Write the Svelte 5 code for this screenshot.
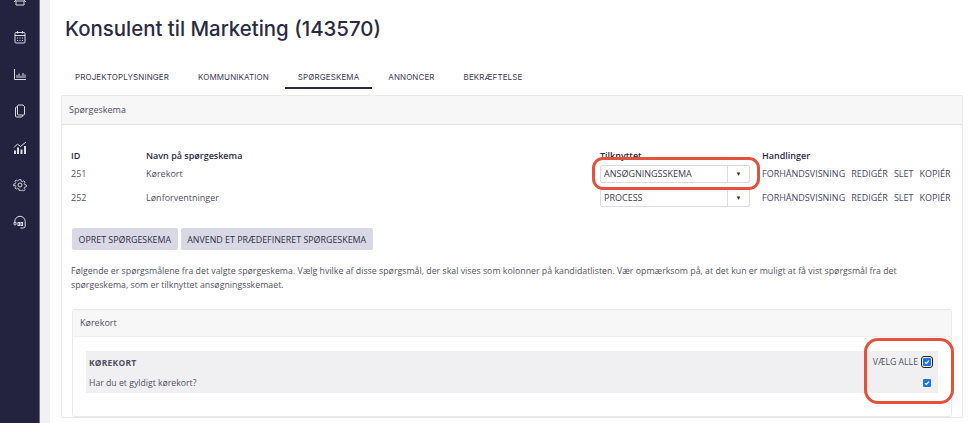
<script>
  const tabs = ['Projektoplysninger', 'Kommunikation', 'Spørgeskema', 'Annoncer', 'Bekræftelse'];
  const rows = [
    { id: 251, name: 'Kørekort', linked: 'ANSØGNINGSSKEMA' },
    { id: 252, name: 'Lønforventninger', linked: 'PROCESS' }
  ];
  const actions = ['Forhåndsvisning', 'Redigér', 'Slet', 'Kopiér'];
</script>

<div class="shell">
  <nav class="sidebar">
    <svg class="icon first" viewBox="0 0 14 14"><path d="M3 1v3c0 1 1 2 4 2s4-1 4-2V1M1 9l2-2M13 9l-2-2M3 8h8v4H3z"/></svg>
    <svg class="icon" viewBox="0 0 14 14"><rect x="2" y="2.500" width="10" height="10.500" rx="1"/><path d="M2 5.500h10M4.500 1v2.500M9.500 1v2.500M4 8h1M6.500 8h1M9 8h1M4 10.500h1M6.500 10.500h1M9 10.500h1"/></svg>
    <svg class="icon" viewBox="0 0 14 14"><path d="M1.500 2v10.500h11.500M4 11V8M6 11V6.500M8 11V8.500M10 11V6M12 11V7.500"/></svg>
    <svg class="icon" viewBox="0 0 14 14"><path d="M5.500 1h4.500l1.500 1.500V10a1 1 0 0 1-1 1H5.500a1 1 0 0 1-1-1V2a1 1 0 0 1 1-1zM4.500 3H3.500a1 1 0 0 0-1 1V12a1 1 0 0 0 1 1h5a1 1 0 0 0 1-1v-1"/></svg>
    <svg class="icon" viewBox="0 0 14 14"><path d="M1 6.500l3.500-3.500 3 2.500L13 1"/><path class="thick" d="M2 13V9.500M5 13V6.500M8.500 13V8.500M12 13V5"/></svg>
    <svg class="icon" viewBox="0 0 14 14"><circle cx="7" cy="7" r="2"/><path d="M6 1h2l.4 1.700 1.300.6 1.500-.9 1.400 1.400-.9 1.500.6 1.300 1.700.4v2l-1.700.4-.6 1.300.9 1.500-1.400 1.400-1.500-.9-1.300.6L8 13H6l-.4-1.700-1.300-.6-1.500.9-1.400-1.400.9-1.500-.6-1.300L0 8V6l1.700-.4.600-1.300-.9-1.500 1.400-1.400 1.500.9 1.300-.6z" transform="translate(.7 .7) scale(.9)"/></svg>
    <svg class="icon" viewBox="0 0 14 14"><path d="M1.800 8V6.500a5.200 5.200 0 0 1 10.400 0V11a2 2 0 0 1-2 2H7.500"/><rect x="1" y="7" width="2" height="3" rx="1"/><rect x="5" y="7.500" width="1.600" height="3"/><rect x="8" y="7.500" width="1.600" height="3"/></svg>
  </nav>

  <div class="gutter"></div>

  <main class="page">
    <h1>Konsulent til Marketing (143570)</h1>

    <div class="tabs">
      {#each tabs as tab, i}
        <span class="tab" class:active={i === 2}>{tab}</span>
      {/each}
    </div>

    <section class="card">
      <header class="card-head">Spørgeskema</header>
      <div class="card-body">
        <div class="table">
          <div class="cell head">ID</div>
          <div class="cell head">Navn på spørgeskema</div>
          <div class="cell head">Tilknyttet</div>
          <div class="cell head">Handlinger</div>
          {#each rows as row}
            <div class="cell">{row.id}</div>
            <div class="cell">{row.name}</div>
            <div class="cell">
              <div class="select">
                <span class="select-value">{row.linked}</span>
                <span class="select-arrow">▼</span>
              </div>
            </div>
            <div class="cell links">
              {#each actions as action}
                <span>{action}</span>
              {/each}
            </div>
          {/each}
          <div class="ring ring-select"></div>
        </div>

        <div class="buttons">
          <button>Opret spørgeskema</button>
          <button>Anvend et prædefineret spørgeskema</button>
        </div>

        <p class="intro">
          Følgende er spørgsmålene fra det valgte spørgeskema. Vælg hvilke af disse spørgsmål, der skal vises som kolonner på kandidatlisten. Vær opmærksom på, at det kun er muligt at få vist spørgsmål fra det spørgeskema, som er tilknyttet ansøgningsskemaet.
        </p>

        <section class="card inner">
          <header class="inner-head">Kørekort</header>
          <div class="inner-body">
            <div class="question">
              <div class="q-row">
                <strong>KØREKORT</strong>
                <span class="select-all">VÆLG ALLE <span class="check-box focus"><svg viewBox="0 0 10 10"><path d="M2.500 5.300l1.700 1.500 3.300-3.600"/></svg></span></span>
              </div>
              <div class="q-row">
                <span>Har du et gyldigt kørekort?</span>
                <span class="check-box"><svg viewBox="0 0 10 10"><path d="M2.500 5.300l1.700 1.500 3.300-3.600"/></svg></span>
              </div>
            </div>
            <div class="ring ring-check"></div>
          </div>
        </section>
      </div>
    </section>
  </main>
</div>

<style>
  :global(body) {
    margin: 0;
    background: #fff;
  }

  .shell {
    display: flex;
    height: 423px;
    overflow: hidden;
    font-family: 'Open Sans', sans-serif;
    color: #50505f;
  }

  .sidebar {
    flex: 0 0 40px;
    box-sizing: border-box;
    background: #23233f;
    border-right: 1px solid #6e6e7c;
    display: flex;
    flex-direction: column;
    align-items: center;
    gap: 23px;
  }

  .icon {
    width: 14px;
    height: 14px;
    flex: none;
    fill: none;
    stroke: #dcdce4;
    stroke-width: 1;
  }

  .icon .thick {
    stroke-width: 2;
  }

  .icon.first {
    margin-top: -7.500px;
  }

  .gutter {
    flex: 0 0 10px;
    background: #f1f1f5;
  }

  .page {
    flex: 1;
    min-width: 0;
    margin-top: 2px;
    background: #fff;
    padding: 0 12px 0 11px;
  }

  h1 {
    margin: 0 0 0 4px;
    padding-top: 14.500px;
    font-family: Inter, sans-serif;
    font-size: 20.400px;
    line-height: 24px;
    font-weight: 500;
    color: #2a2a45;
  }

  .tabs {
    display: flex;
    gap: 3px;
    margin: 27.500px 0 0 1px;
  }

  .tab {
    box-sizing: border-box;
    height: 21px;
    padding: 0 13px;
    font-family: Inter, sans-serif;
    font-size: 8px;
    line-height: 19px;
    letter-spacing: 0.1px;
    text-transform: uppercase;
    color: #3a3a52;
  }

  .tab.active {
    border-bottom: 2.500px solid #2a2a45;
  }

  .card {
    border: 1px solid #e9e9ec;
    border-radius: 2px;
    background: #fff;
  }

  .tabs + .card {
    margin-top: 6px;
  }

  .card-head {
    height: 28px;
    padding-left: 7px;
    font-size: 9px;
    line-height: 27px;
    background: #f7f7f8;
    border-bottom: 1px solid #e4e4e8;
  }

  .card-body {
    padding: 24px 10px 0 9px;
  }

  .table {
    position: relative;
    display: grid;
    grid-template-columns: 75px 454px 162px 1fr;
    grid-template-rows: 13px 23px 25px;
    align-items: center;
    font-size: 9px;
  }

  .cell.head {
    font-weight: 600;
    color: #2a2a45;
  }

  .select {
    box-sizing: border-box;
    width: 150px;
    height: 18px;
    display: flex;
    align-items: center;
    border: 1px solid #dcdce0;
    border-radius: 2px;
    color: #3a3a4e;
    background: #fff;
  }

  .select-value {
    flex: 1;
    padding-left: 3px;
  }

  .select-arrow {
    width: 21px;
    text-align: center;
    font-size: 6px;
    line-height: 16px;
    border-left: 1px solid #dcdce0;
    color: #333;
  }

  .links {
    display: flex;
    gap: 6px;
    color: #45456a;
    white-space: nowrap;
    text-transform: uppercase;
  }

  .ring {
    position: absolute;
    box-sizing: border-box;
    border: 3.500px solid #e4513c;
    pointer-events: none;
  }

  .ring-select {
    left: 521px;
    top: 8px;
    width: 168px;
    height: 33px;
    border-radius: 11px;
  }

  .buttons {
    display: flex;
    gap: 3px;
    margin: 18px 0 0 1px;
  }

  button {
    height: 22px;
    padding: 0 6.500px;
    border: 0;
    border-radius: 2px;
    background: #d9d9e5;
    color: #2f2f48;
    font-family: 'Open Sans', sans-serif;
    font-size: 8.900px;
    text-transform: uppercase;
  }

  .intro {
    margin: 14px 0 0;
    padding-right: 10px;
    font-size: 8.800px;
    line-height: 14px;
    color: #55555f;
  }

  .inner {
    margin: 17px 0 0 1px;
    border-radius: 3px;
  }

  .inner-head {
    height: 26px;
    padding-left: 7px;
    font-size: 9px;
    line-height: 26px;
    background: #f7f7f8;
    border-bottom: 1px solid #efeff1;
  }

  .inner-body {
    position: relative;
    padding: 14px 13px 23px;
  }

  .question {
    background: #f0f0f3;
    padding: 1px 7px 0 3px;
  }

  .q-row {
    display: flex;
    justify-content: space-between;
    align-items: center;
    height: 20.500px;
    font-size: 8.700px;
  }

  .q-row strong {
    font-weight: 700;
    font-size: 8.500px;
    letter-spacing: 0.2px;
  }

  .select-all {
    display: flex;
    align-items: center;
    gap: 5px;
  }

  .check-box {
    display: block;
    width: 8px;
    height: 8px;
    border-radius: 1px;
    background: #1a73e8;
  }

  .check-box svg {
    display: block;
    width: 8px;
    height: 8px;
    fill: none;
    stroke: #fff;
    stroke-width: 1.500;
  }

  .check-box.focus {
    outline: 1px solid #222;
    outline-offset: 1px;
  }

  .ring-check {
    left: 791px;
    top: 1px;
    width: 90px;
    height: 66px;
    border-radius: 14px;
  }
</style>
